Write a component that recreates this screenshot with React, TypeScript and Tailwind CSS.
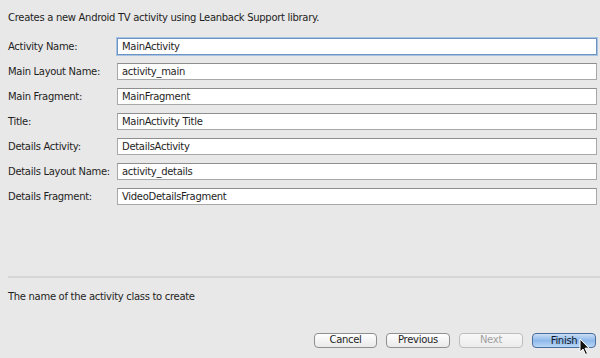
import React from "react";

interface Field {
  label: string;
  value: string;
  focused?: boolean;
}

const fields: Field[] = [
  { label: "Activity Name:", value: "MainActivity", focused: true },
  { label: "Main Layout Name:", value: "activity_main" },
  { label: "Main Fragment:", value: "MainFragment" },
  { label: "Title:", value: "MainActivity Title" },
  { label: "Details Activity:", value: "DetailsActivity" },
  { label: "Details Layout Name:", value: "activity_details" },
  { label: "Details Fragment:", value: "VideoDetailsFragment" },
];

const font = { fontFamily: '"DejaVu Sans", "Open Sans", sans-serif' };

const Cursor = () => (
  <svg width="12" height="18" viewBox="0 0 12 18" className="absolute left-[47px] top-[5px]">
    <path
      d="M1 1 L1 14 L4 11 L6.5 16.5 L8.5 15.5 L6 10.2 L10 10.2 Z"
      fill="#111"
      stroke="#fff"
      strokeWidth="1"
      strokeLinejoin="round"
    />
  </svg>
);

const btn = "h-[15px] rounded-[4px] border leading-none tracking-[-0.3px]";

const App: React.FC = () => {
  return (
    <div
      className="w-[600px] h-[358px] bg-[#e8e8e8] flex flex-col text-[10px] tracking-[-0.3px] text-[#1e1e1e] overflow-hidden"
      style={font}
    >
      <div className="pl-2 pt-[11px] leading-[13px]">
        Creates a new Android TV activity using Leanback Support library.
      </div>

      {/* form */}
      <div className="flex flex-col gap-2 mt-[14px] pl-2 pr-[3px]">
        {fields.map((f) => (
          <div key={f.label} className="flex items-center h-[17px]">
            <div className="w-[109px] shrink-0">{f.label}</div>
            <div
              className={
                f.focused
                  ? "flex-1 h-[17px] bg-white border border-[#6d93c4] shadow-[0_0_0_1px_#a9c3e3] flex items-center pl-1 leading-none"
                  : "flex-1 h-[17px] bg-white border border-[#a8a8a8] border-t-[#8e8e8e] flex items-center pl-1 leading-none"
              }
            >
              {f.value}
            </div>
          </div>
        ))}
      </div>

      {/* separator */}
      <div className="mt-auto ml-2 border-t-2 border-[#d6d6d6]" />

      <div className="pl-2 pt-[12px] leading-[13px]">The name of the activity class to create</div>

      {/* buttons */}
      <div className="flex justify-end gap-[9px] pr-1 pb-[10px] mt-[30px]">
        <button className={`${btn} w-[63px] border-[#8f8f8f] bg-gradient-to-b from-white to-[#e9e9e9] text-[#1e1e1e]`}>
          Cancel
        </button>
        <button className={`${btn} w-[64px] border-[#8f8f8f] bg-gradient-to-b from-white to-[#e9e9e9] text-[#1e1e1e]`}>
          Previous
        </button>
        <button className={`${btn} w-[64px] border-[#bdbdbd] bg-gradient-to-b from-[#f8f8f8] to-[#ececec] text-[#a0a0a0]`}>
          Next
        </button>
        <div className="relative">
          <button
            className={`${btn} w-[64px] border-[#4a6f9e] bg-gradient-to-b from-[#c9def5] via-[#8fb9ea] to-[#b9d6f4] text-[#101828]`}
          >
            Finish
          </button>
          <Cursor />
        </div>
      </div>
    </div>
  );
};

export default App;
